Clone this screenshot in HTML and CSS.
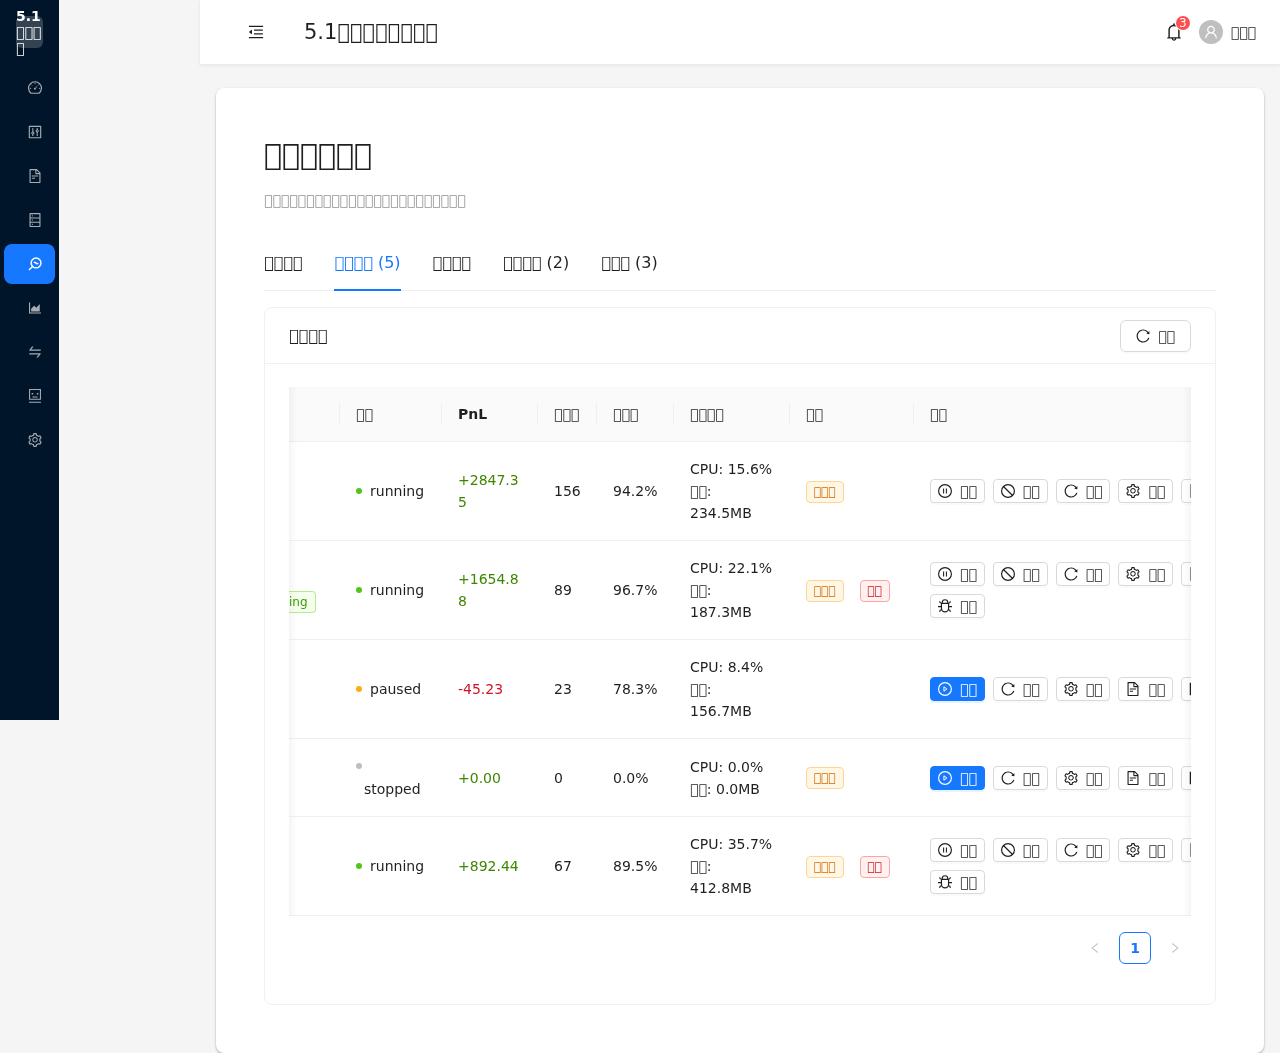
FILE: index.html
```
<!DOCTYPE html>
<html lang="zh-CN">
<head>
<meta charset="utf-8">
<meta name="viewport" content="width=device-width, initial-scale=1">
<title>5.1</title>
<link rel="stylesheet" href="styles.css">
</head>
<body>
<svg class="sprite" aria-hidden="true">
  <symbol id="setting" viewBox="64 64 896 896"><path d="M924.8 625.7l-65.5-56c3.1-19 4.7-38.4 4.7-57.8s-1.6-38.8-4.7-57.8l65.5-56a32.03 32.03 0 009.3-35.2l-.9-2.6a443.74 443.74 0 00-79.7-137.9l-1.8-2.1a32.12 32.12 0 00-35.1-9.5l-81.3 28.9c-30-24.6-63.5-44-99.7-57.6l-15.7-85a32.05 32.05 0 00-25.8-25.7l-2.7-.5c-52.1-9.4-106.9-9.4-159 0l-2.7.5a32.05 32.05 0 00-25.8 25.7l-15.8 85.4a351.86 351.86 0 00-99 57.4l-81.9-29.1a32 32 0 00-35.1 9.5l-1.8 2.1a446.02 446.02 0 00-79.7 137.9l-.9 2.6c-4.5 12.5-.8 26.5 9.3 35.2l66.3 56.6c-3.1 18.8-4.6 38-4.6 57.1 0 19.2 1.5 38.4 4.6 57.1L99 625.5a32.03 32.03 0 00-9.3 35.2l.9 2.6c18.1 50.4 44.9 96.9 79.7 137.9l1.8 2.1a32.12 32.12 0 0035.1 9.5l81.9-29.1c29.8 24.5 63.1 43.9 99 57.4l15.8 85.4a32.05 32.05 0 0025.8 25.7l2.7.5a449.4 449.4 0 00159 0l2.7-.5a32.05 32.05 0 0025.8-25.7l15.7-85a350 350 0 0099.7-57.6l81.3 28.9a32 32 0 0035.1-9.5l1.8-2.1c34.8-41.1 61.6-87.5 79.7-137.9l.9-2.6c4.5-12.3.8-26.3-9.3-35zM788.3 465.9c2.5 15.1 3.8 30.6 3.8 46.1s-1.3 31-3.8 46.1l-6.6 40.1 74.7 63.9a370.03 370.03 0 01-42.6 73.6L721 702.8l-31.4 25.8c-23.9 19.6-50.5 35-79.3 45.8l-38.1 14.3-17.9 97a377.5 377.5 0 01-85 0l-17.9-97.2-37.8-14.5c-28.5-10.8-55-26.2-78.7-45.7l-31.4-25.9-93.4 33.2c-17-22.9-31.2-47.6-42.6-73.6l75.5-64.5-6.5-40c-2.4-14.9-3.7-30.3-3.7-45.5 0-15.3 1.2-30.6 3.7-45.5l6.5-40-75.5-64.5c11.3-26.1 25.6-50.7 42.6-73.6l93.4 33.2 31.4-25.9c23.7-19.5 50.2-34.9 78.7-45.7l37.9-14.3 17.9-97.2c28.1-3.2 56.8-3.2 85 0l17.9 97 38.1 14.3c28.7 10.8 55.4 26.2 79.3 45.8l31.4 25.8 92.8-32.9c17 22.9 31.2 47.6 42.6 73.6L781.8 426l6.5 39.9zM512 326c-97.2 0-176 78.8-176 176s78.8 176 176 176 176-78.8 176-176-78.8-176-176-176zm79.2 255.2A111.6 111.6 0 01512 614c-29.9 0-58-11.7-79.2-32.8A111.6 111.6 0 01400 502c0-29.9 11.7-58 32.8-79.2C454 401.6 482.1 390 512 390c29.9 0 58 11.6 79.2 32.8A111.6 111.6 0 01624 502c0 29.9-11.7 58-32.8 79.2z"/></symbol>
  <symbol id="reload" viewBox="64 64 896 896"><path d="M909.1 209.3l-56.4 44.1C775.8 155.1 656.2 92 521.9 92 290 92 102.3 279.5 102 511.5 101.7 743.7 289.8 932 521.9 932c181.3 0 335.8-115 394.6-276.1 1.5-4.2-.7-8.9-4.9-10.3l-56.7-19.5a8 8 0 00-10.1 4.8c-1.8 5-3.8 10-5.9 14.9-17.3 41-42.1 77.8-73.7 109.4A344.77 344.77 0 01655.9 829c-42.3 17.9-87.4 27-133.8 27-46.5 0-91.5-9.1-133.8-27A341.5 341.5 0 01279 755.2a342.16 342.16 0 01-73.7-109.4c-17.9-42.4-27-87.4-27-133.9s9.1-91.5 27-133.9c17.3-41 42.1-77.8 73.7-109.4 31.6-31.6 68.4-56.4 109.3-73.8 42.3-17.9 87.4-27 133.8-27 46.5 0 91.5 9.1 133.8 27a341.5 341.5 0 01109.3 73.8c9.9 9.9 19.2 20.4 27.8 31.4l-60.2 47a8 8 0 003 14.1l175.6 43c5 1.2 9.9-2.6 9.9-7.7l.8-180.9c-.1-6.6-7.8-10.3-13-6.2z"/></symbol>
  <symbol id="file" viewBox="64 64 896 896"><path d="M854.6 288.6L639.4 73.4c-6-6-14.1-9.4-22.6-9.4H192c-17.7 0-32 14.3-32 32v832c0 17.7 14.3 32 32 32h640c17.7 0 32-14.3 32-32V311.3c0-8.5-3.4-16.7-9.4-22.7zM790.2 326H602V137.8L790.2 326zm1.8 562H232V136h302v216a42 42 0 0042 42h216v494zM504 618H320c-4.4 0-8 3.6-8 8v48c0 4.4 3.6 8 8 8h184c4.4 0 8-3.6 8-8v-48c0-4.4-3.6-8-8-8zM312 490v48c0 4.4 3.6 8 8 8h384c4.4 0 8-3.6 8-8v-48c0-4.4-3.6-8-8-8H320c-4.4 0-8 3.6-8 8z"/></symbol>
  <symbol id="database" viewBox="64 64 896 896"><path d="M832 64H192c-17.7 0-32 14.3-32 32v832c0 17.7 14.3 32 32 32h640c17.7 0 32-14.3 32-32V96c0-17.7-14.3-32-32-32zm-600 72h560v208H232V136zm560 480H232V408h560v208zm0 272H232V680h560v208zM304 240a40 40 0 1080 0 40 40 0 10-80 0zm0 272a40 40 0 1080 0 40 40 0 10-80 0zm0 272a40 40 0 1080 0 40 40 0 10-80 0z"/></symbol>
  <symbol id="control" viewBox="64 64 896 896"><path d="M880 112H144c-17.7 0-32 14.3-32 32v736c0 17.7 14.3 32 32 32h736c17.7 0 32-14.3 32-32V144c0-17.7-14.3-32-32-32zm-40 728H184V184h656v656z"/><g fill="none" stroke="currentColor" stroke-width="64"><path d="M372 256v250M372 662v106M652 256v106M652 518v250"/><circle cx="372" cy="584" r="72"/><circle cx="652" cy="440" r="72"/></g></symbol>
  <symbol id="swap" viewBox="64 64 896 896"><path d="M847.9 592H152c-4.4 0-8 3.6-8 8v60c0 4.4 3.6 8 8 8h605.2L612.9 851c-4.1 5.2-.4 13 6.3 13h72.5c4.9 0 9.5-2.2 12.6-6.1l168.8-214.1c16.5-21 1.6-51.8-25.2-51.8zM872 356H266.8l144.3-183c4.1-5.2.4-13-6.3-13h-72.5c-4.9 0-9.5 2.2-12.6 6.1L150.9 380.2c-16.5 21-1.6 51.8 25.1 51.8h696c4.4 0 8-3.6 8-8v-60c0-4.4-3.6-8-8-8z"/></symbol>
  <symbol id="chart" viewBox="64 64 896 896"><path d="M888 792H200V168c0-4.4-3.6-8-8-8h-56c-4.4 0-8 3.6-8 8v688c0 4.4 3.6 8 8 8h752c4.4 0 8-3.6 8-8v-56c0-4.4-3.6-8-8-8zm-616-64h536c4.4 0 8-3.6 8-8V284c0-7.2-8.7-10.7-13.7-5.7L592 488.6l-125.4-124a8.03 8.03 0 00-11.3 0l-189 189.6a7.87 7.87 0 00-2.3 5.6V720c0 4.4 3.6 8 8 8z"/></symbol>
  <symbol id="fold" viewBox="64 64 896 896"><path d="M408 442h480c4.4 0 8-3.6 8-8v-56c0-4.4-3.6-8-8-8H408c-4.4 0-8 3.6-8 8v56c0 4.4 3.6 8 8 8zm-8 204c0 4.4 3.6 8 8 8h480c4.4 0 8-3.6 8-8v-56c0-4.4-3.6-8-8-8H408c-4.4 0-8 3.6-8 8v56zm504-486H120c-4.4 0-8 3.6-8 8v56c0 4.4 3.6 8 8 8h784c4.4 0 8-3.6 8-8v-56c0-4.4-3.6-8-8-8zm0 632H120c-4.4 0-8 3.6-8 8v56c0 4.4 3.6 8 8 8h784c4.4 0 8-3.6 8-8v-56c0-4.4-3.6-8-8-8zM115.4 518.9L271.7 642c5.8 4.6 14.4.5 14.4-6.9V388.9c0-7.4-8.5-11.5-14.4-6.9L115.4 505.1a8.74 8.74 0 000 13.8z"/></symbol>
  <symbol id="bell" viewBox="64 64 896 896"><path d="M816 768h-24V428c0-141.1-104.3-257.7-240-277.1V112c0-22.1-17.9-40-40-40s-40 17.9-40 40v38.9c-135.7 19.4-240 136-240 277.1v340h-24c-17.7 0-32 14.3-32 32v32c0 4.4 3.6 8 8 8h216c0 61.8 50.2 112 112 112s112-50.2 112-112h216c4.4 0 8-3.6 8-8v-32c0-17.7-14.3-32-32-32zM512 888c-26.5 0-48-21.5-48-48h96c0 26.5-21.5 48-48 48zM304 768V428c0-55.6 21.6-107.8 60.9-147.1S456.4 220 512 220c55.6 0 107.8 21.6 147.1 60.9S720 372.4 720 428v340H304z"/></symbol>
  <symbol id="user" viewBox="64 64 896 896"><path d="M858.5 763.6a374 374 0 00-80.6-119.5 375.63 375.63 0 00-119.5-80.6c-.4-.2-.8-.3-1.2-.5C719.5 518 760 444.7 760 362c0-137-111-248-248-248S264 225 264 362c0 82.7 40.5 156 102.8 201.1-.4.2-.8.3-1.2.5-44.8 18.9-85 46-119.5 80.6a375.63 375.63 0 00-80.6 119.5A371.7 371.7 0 00136 901.8a8 8 0 008 8.2h60c4.4 0 7.9-3.5 8-7.8 2-77.2 33-149.5 87.8-204.3 56.7-56.7 132-87.9 212.2-87.9s155.5 31.2 212.2 87.9C779 752.7 810 825 812 902.2c.1 4.4 3.6 7.8 8 7.8h60a8 8 0 008-8.2c-1-47.8-10.9-94.3-29.5-138.2zM512 534c-45.9 0-89.1-17.9-121.6-50.4S340 407.9 340 362c0-45.9 17.9-89.1 50.4-121.6S466.1 190 512 190s89.1 17.9 121.6 50.4S684 316.1 684 362c0 45.9-17.9 89.1-50.4 121.6S557.9 534 512 534z"/></symbol>
  <symbol id="left" viewBox="64 64 896 896"><path d="M724 218.3V141c0-6.7-7.7-10.4-12.9-6.3L260.3 486.8a31.86 31.86 0 000 50.3l450.8 352.1c5.3 4.1 12.9.4 12.9-6.3v-77.3c0-4.9-2.3-9.6-6.1-12.6l-360-281 360-281.1c3.8-3 6.1-7.7 6.1-12.6z"/></symbol>
  <symbol id="right" viewBox="64 64 896 896"><path d="M765.7 486.8L314.9 134.7A7.97 7.97 0 00302 141v77.3c0 4.9 2.3 9.6 6.1 12.6l360 281.1-360 281.1c-3.9 3-6.1 7.7-6.1 12.6V883c0 6.7 7.7 10.4 12.9 6.3l450.8-352.1a31.96 31.96 0 000-50.4z"/></symbol>
  <symbol id="dashboard" viewBox="64 64 896 896"><g fill="none" stroke="currentColor" stroke-width="72"><path d="M260 846A412 412 0 1 1 764 846Z" stroke-linejoin="round"/><path stroke-width="56" d="M512 182v84M262 286l58 58M762 286l-58 58M180 536h84M760 536h84M500 556l150-148"/></g><circle cx="500" cy="558" r="56"/></symbol>
  <symbol id="monitor" viewBox="64 64 896 896"><g fill="none" stroke="currentColor"><circle cx="580" cy="444" r="314" stroke-width="92"/><path stroke-width="92" d="M350 674L130 894"/><path stroke-width="84" d="M430 404l110 12 78 84 112-24"/></g></symbol>
  <symbol id="robot" viewBox="64 64 896 896"><path fill="none" stroke="currentColor" stroke-width="68" d="M164 100h696v620H164z"/><path d="M300 312h96v96h-96zM628 312h96v96h-96zM352 540h320v68H352zM128 876h768v72H128z"/></symbol>
  <symbol id="pause" viewBox="64 64 896 896"><g fill="none" stroke="currentColor" stroke-width="74"><circle cx="512" cy="512" r="410"/><path stroke-width="68" d="M422 352v320M602 352v320"/></g></symbol>
  <symbol id="stop" viewBox="64 64 896 896"><g fill="none" stroke="currentColor" stroke-width="76"><circle cx="512" cy="512" r="410"/><path d="M222 222l580 580"/></g></symbol>
  <symbol id="play" viewBox="64 64 896 896"><g fill="none" stroke="currentColor" stroke-width="74"><circle cx="512" cy="512" r="410"/><path stroke-width="64" d="M442 370l190 142-190 142z"/></g></symbol>
  <symbol id="bug" viewBox="64 64 896 896"><g fill="none" stroke="currentColor" stroke-width="76"><path d="M284 338h456v320a228 228 0 0 1-456 0zM336 338v-50a176 176 0 0 1 352 0v50M284 338c-90-10-114-60-118-134M740 338c90-10 114-60 118-134M64 548h220M740 548h220M300 718c-90 16-126 70-130 170M724 718c90 16 126 70 130 170"/></g></symbol>
  <symbol id="box" viewBox="64 64 896 896"><path fill="none" stroke="currentColor" stroke-width="80" d="M152 152h720v720H152z"/></symbol>
</svg>

<div class="layout">
  <aside class="sider">
    <div class="logo"><span>5.1<wbr>&#xE000;&#xE000;&#xE000;<wbr>&#xE000;</span></div>
    <nav class="menu">
      <a href="#"><svg><use href="#dashboard"/></svg></a>
      <a href="#"><svg><use href="#control"/></svg></a>
      <a href="#"><svg><use href="#file"/></svg></a>
      <a href="#"><svg><use href="#database"/></svg></a>
      <a href="#" class="active"><svg><use href="#monitor"/></svg></a>
      <a href="#"><svg><use href="#chart"/></svg></a>
      <a href="#"><svg><use href="#swap"/></svg></a>
      <a href="#"><svg><use href="#robot"/></svg></a>
      <a href="#"><svg><use href="#setting"/></svg></a>
    </nav>
  </aside>

  <div class="main">
    <header class="topbar">
      <button class="fold" type="button"><svg><use href="#fold"/></svg></button>
      <h1>5.1&#xE000;&#xE000;&#xE000;&#xE000;&#xE000;&#xE000;&#xE000;&#xE000;</h1>
      <button class="bell" type="button"><svg><use href="#bell"/></svg><span class="count">3</span></button>
      <span class="avatar"><svg><use href="#user"/></svg></span>
      <span class="name">&#xE000;&#xE000;&#xE000;</span>
    </header>

    <main class="content">
      <h2>&#xE000;&#xE000;&#xE000;&#xE000;&#xE000;&#xE000;</h2>
      <p class="intro">&#xE000;&#xE000;&#xE000;&#xE000;&#xE000;&#xE000;&#xE000;&#xE000;&#xE000;&#xE000;&#xE000;&#xE000;&#xE000;&#xE000;&#xE000;&#xE000;&#xE000;&#xE000;&#xE000;&#xE000;&#xE000;&#xE000;&#xE000;&#xE000;</p>

      <div class="tabs" role="tablist">
        <button type="button" role="tab">&#xE000;&#xE000;&#xE000;&#xE000;</button>
        <button type="button" role="tab" class="active" aria-selected="true">&#xE000;&#xE000;&#xE000;&#xE000; (5)</button>
        <button type="button" role="tab">&#xE000;&#xE000;&#xE000;&#xE000;</button>
        <button type="button" role="tab">&#xE000;&#xE000;&#xE000;&#xE000; (2)</button>
        <button type="button" role="tab">&#xE000;&#xE000;&#xE000; (3)</button>
      </div>

      <section class="card">
        <div class="card-head">
          <h3>&#xE000;&#xE000;&#xE000;&#xE000;</h3>
          <button class="btn large" type="button"><svg><use href="#reload"/></svg><span>&#xE000;&#xE000;</span></button>
        </div>
        <div class="card-body">
          <div class="table-wrap">
            <table>
              <colgroup><col class="c-type"><col class="c-status"><col class="c-pnl"><col class="c-trades"><col class="c-rate"><col class="c-usage"><col class="c-flags"><col class="c-actions"></colgroup>
              <thead>
                <tr>
                  <th></th>
                  <th>&#xE000;&#xE000;</th>
                  <th>PnL</th>
                  <th>&#xE000;&#xE000;&#xE000;</th>
                  <th>&#xE000;&#xE000;&#xE000;</th>
                  <th>&#xE000;&#xE000;&#xE000;&#xE000;</th>
                  <th>&#xE000;&#xE000;</th>
                  <th>&#xE000;&#xE000;</th>
                </tr>
              </thead>
              <tbody>
                <tr>
                  <td></td>
                  <td><div class="status"><i class="dot"></i><span>running</span></div></td>
                  <td class="up">+2847.35</td>
                  <td>156</td>
                  <td>94.2%</td>
                  <td><div>CPU: 15.6%</div><div>&#xE000;&#xE000;: 234.5MB</div></td>
                  <td class="flags"><span class="tag orange">&#xE000;&#xE000;&#xE000;</span></td>
                  <td><div class="actions">
                    <button class="btn" type="button"><svg><use href="#pause"/></svg><span>&#xE000;&#xE000;</span></button>
                    <button class="btn" type="button"><svg><use href="#stop"/></svg><span>&#xE000;&#xE000;</span></button>
                    <button class="btn" type="button"><svg><use href="#reload"/></svg><span>&#xE000;&#xE000;</span></button>
                    <button class="btn" type="button"><svg><use href="#setting"/></svg><span>&#xE000;&#xE000;</span></button>
                    <button class="btn" type="button"><svg><use href="#file"/></svg><span>&#xE000;&#xE000;</span></button>
                  </div></td>
                </tr>
                <tr>
                  <td class="type"><span class="tag green cut">ing</span></td>
                  <td><div class="status"><i class="dot"></i><span>running</span></div></td>
                  <td class="up">+1654.88</td>
                  <td>89</td>
                  <td>96.7%</td>
                  <td><div>CPU: 22.1%</div><div>&#xE000;&#xE000;: 187.3MB</div></td>
                  <td class="flags"><span class="tag orange">&#xE000;&#xE000;&#xE000;</span><span class="tag red">&#xE000;&#xE000;</span></td>
                  <td><div class="actions">
                    <button class="btn" type="button"><svg><use href="#pause"/></svg><span>&#xE000;&#xE000;</span></button>
                    <button class="btn" type="button"><svg><use href="#stop"/></svg><span>&#xE000;&#xE000;</span></button>
                    <button class="btn" type="button"><svg><use href="#reload"/></svg><span>&#xE000;&#xE000;</span></button>
                    <button class="btn" type="button"><svg><use href="#setting"/></svg><span>&#xE000;&#xE000;</span></button>
                    <button class="btn" type="button"><svg><use href="#file"/></svg><span>&#xE000;&#xE000;</span></button>
                    <button class="btn" type="button"><svg><use href="#bug"/></svg><span>&#xE000;&#xE000;</span></button>
                  </div></td>
                </tr>
                <tr>
                  <td></td>
                  <td><div class="status"><i class="dot paused"></i><span>paused</span></div></td>
                  <td class="down">-45.23</td>
                  <td>23</td>
                  <td>78.3%</td>
                  <td><div>CPU: 8.4%</div><div>&#xE000;&#xE000;: 156.7MB</div></td>
                  <td></td>
                  <td><div class="actions">
                    <button class="btn primary" type="button"><svg><use href="#play"/></svg><span>&#xE000;&#xE000;</span></button>
                    <button class="btn" type="button"><svg><use href="#reload"/></svg><span>&#xE000;&#xE000;</span></button>
                    <button class="btn" type="button"><svg><use href="#setting"/></svg><span>&#xE000;&#xE000;</span></button>
                    <button class="btn" type="button"><svg><use href="#file"/></svg><span>&#xE000;&#xE000;</span></button>
                    <button class="btn" type="button"><svg><use href="#box"/></svg><span>&#xE000;&#xE000;</span></button>
                  </div></td>
                </tr>
                <tr>
                  <td></td>
                  <td><div class="status"><i class="dot stopped"></i><span>stopped</span></div></td>
                  <td class="up">+0.00</td>
                  <td>0</td>
                  <td>0.0%</td>
                  <td><div>CPU: 0.0%</div><div>&#xE000;&#xE000;: 0.0MB</div></td>
                  <td class="flags"><span class="tag orange">&#xE000;&#xE000;&#xE000;</span></td>
                  <td><div class="actions">
                    <button class="btn primary" type="button"><svg><use href="#play"/></svg><span>&#xE000;&#xE000;</span></button>
                    <button class="btn" type="button"><svg><use href="#reload"/></svg><span>&#xE000;&#xE000;</span></button>
                    <button class="btn" type="button"><svg><use href="#setting"/></svg><span>&#xE000;&#xE000;</span></button>
                    <button class="btn" type="button"><svg><use href="#file"/></svg><span>&#xE000;&#xE000;</span></button>
                    <button class="btn" type="button"><svg><use href="#box"/></svg><span>&#xE000;&#xE000;</span></button>
                  </div></td>
                </tr>
                <tr>
                  <td></td>
                  <td><div class="status"><i class="dot"></i><span>running</span></div></td>
                  <td class="up">+892.44</td>
                  <td>67</td>
                  <td>89.5%</td>
                  <td><div>CPU: 35.7%</div><div>&#xE000;&#xE000;: 412.8MB</div></td>
                  <td class="flags"><span class="tag orange">&#xE000;&#xE000;&#xE000;</span><span class="tag red">&#xE000;&#xE000;</span></td>
                  <td><div class="actions">
                    <button class="btn" type="button"><svg><use href="#pause"/></svg><span>&#xE000;&#xE000;</span></button>
                    <button class="btn" type="button"><svg><use href="#stop"/></svg><span>&#xE000;&#xE000;</span></button>
                    <button class="btn" type="button"><svg><use href="#reload"/></svg><span>&#xE000;&#xE000;</span></button>
                    <button class="btn" type="button"><svg><use href="#setting"/></svg><span>&#xE000;&#xE000;</span></button>
                    <button class="btn" type="button"><svg><use href="#file"/></svg><span>&#xE000;&#xE000;</span></button>
                    <button class="btn" type="button"><svg><use href="#bug"/></svg><span>&#xE000;&#xE000;</span></button>
                  </div></td>
                </tr>
              </tbody>
            </table>
          </div>
          <nav class="pagination">
            <button type="button" disabled><svg><use href="#left"/></svg></button>
            <button type="button" class="current">1</button>
            <button type="button" disabled><svg><use href="#right"/></svg></button>
          </nav>
        </div>
      </section>
    </main>
  </div>
</div>
</body>
</html>
```
FILE: styles.css
```
* { box-sizing: border-box; }

body {
  margin: 0;
  background: #f5f5f5;
  color: rgba(0, 0, 0, .88);
  font: 14px/22px "DejaVu Sans", sans-serif;
}

h1, h2, h3, p { margin: 0; font-weight: 400; }

button {
  margin: 0;
  padding: 0;
  border: 0;
  background: none;
  color: inherit;
  font: inherit;
  cursor: pointer;
}

svg { width: 14px; height: 14px; fill: currentColor; display: block; flex: none; }

.sprite { position: absolute; width: 0; height: 0; }

.layout {
  display: grid;
  grid-template-columns: 200px minmax(0, 1fr);
  will-change: transform;
}

/* sidebar */
.sider { width: 59px; height: 720px; background: #001529; }

.logo {
  display: flex;
  align-items: center;
  height: 32px;
  margin: 16px;
  border-radius: 6px;
  background: rgba(255, 255, 255, .2);
  color: #fff;
  font-weight: 700;
  line-height: 16px;
}

.menu { display: flex; flex-direction: column; gap: 4px; padding: 4px; }

.menu a {
  display: flex;
  align-items: center;
  height: 40px;
  padding-left: 24px;
  border-radius: 8px;
  color: rgba(255, 255, 255, .65);
}

.menu a.active { background: #1677ff; color: #fff; }

/* top bar */
.topbar {
  display: flex;
  align-items: center;
  height: 64px;
  padding: 0 24px;
  background: #fff;
  box-shadow: 0 1px 4px rgba(0, 21, 41, .08);
}

.fold { display: grid; place-items: center; width: 64px; height: 64px; }
.fold svg { width: 16px; height: 16px; }

.topbar h1 { flex: 1; margin-left: 16px; font-size: 21px; line-height: 32px; }

.bell { position: relative; margin-right: 16px; }
.bell svg { width: 18px; height: 18px; }

.count {
  position: absolute;
  top: -7px;
  right: -7px;
  width: 14px;
  height: 14px;
  border-radius: 7px;
  background: #ff4d4f;
  box-shadow: 0 0 0 1px #fff;
  color: #fff;
  font-size: 12px;
  line-height: 14px;
  text-align: center;
}

.avatar {
  display: grid;
  place-items: center;
  width: 24px;
  height: 24px;
  margin-right: 8px;
  border-radius: 50%;
  background: #bfbfbf;
  color: #fff;
}

/* page */
.content {
  margin: 24px 16px 0;
  padding: 48px;
  border-radius: 8px;
  background: #fff;
  box-shadow: 0 1px 3px rgba(0, 0, 0, .12), 0 1px 2px rgba(0, 0, 0, .24);
}

.content h2 { margin-bottom: 15px; font-size: 30px; line-height: 38px; }

.intro { margin-bottom: 25px; color: rgba(0, 0, 0, .45); }

.tabs {
  display: flex;
  gap: 32px;
  margin-bottom: 16px;
  box-shadow: inset 0 -1px #f0f0f0;
}

.tabs button { padding: 14px 0 16px; font-size: 16px; line-height: 25px; }
.tabs .active { color: #1677ff; box-shadow: inset 0 -2px #1677ff; }

.card { border: 1px solid #f0f0f0; border-radius: 8px; }

.card-head {
  display: flex;
  align-items: center;
  justify-content: space-between;
  height: 56px;
  padding: 0 24px;
  border-bottom: 1px solid #f0f0f0;
}

.card-head h3 { font-size: 16px; line-height: 24px; }

.card-body { padding: 23px 24px 40px; }

/* buttons */
.btn {
  display: flex;
  align-items: center;
  gap: 8px;
  height: 24px;
  padding: 0 7px;
  border: 1px solid #d9d9d9;
  border-radius: 4px;
  background: #fff;
  box-shadow: 0 2px 0 rgba(0, 0, 0, .02);
}

.btn.large { height: 32px; padding: 0 15px; border-radius: 6px; }

.btn.primary {
  border-color: #1677ff;
  background: #1677ff;
  box-shadow: 0 2px 0 rgba(5, 145, 255, .1);
  color: #fff;
}

/* table */
.table-wrap { position: relative; overflow: hidden; }

.table-wrap::before,
.table-wrap::after {
  content: "";
  position: absolute;
  top: 0;
  bottom: 0;
  width: 30px;
  pointer-events: none;
}

.table-wrap::before { left: 0; box-shadow: inset 10px 0 8px -8px rgba(5, 5, 5, .06); }
.table-wrap::after { right: 0; box-shadow: inset -10px 0 8px -8px rgba(5, 5, 5, .06); }

table { width: 977px; table-layout: fixed; border-collapse: separate; border-spacing: 0; }

.c-type { width: 51px; }
.c-status { width: 102px; }
.c-pnl { width: 96px; }
.c-trades { width: 59px; }
.c-rate { width: 77px; }
.c-usage { width: 116px; }
.c-flags { width: 124px; }
.c-actions { width: 352px; }

th, td {
  padding: 16px;
  border-bottom: 1px solid #f0f0f0;
  text-align: left;
  overflow-wrap: break-word;
}

th {
  background: linear-gradient(#f0f0f0, #f0f0f0) right center / 1px 22px no-repeat #fafafa;
  font-weight: 700;
  white-space: nowrap;
}

td.type { padding: 40px 24px 16px 0; }

.status { display: flex; flex-wrap: wrap; row-gap: 1px; }
.status span { margin-left: 8px; }

.dot { width: 6px; height: 6px; margin: 8px 0; border-radius: 50%; background: #52c41a; }
.dot.paused { background: #faad14; }
.dot.stopped { background: #bfbfbf; }

.up { color: #3f8600; }
.down { color: #cf1322; }

.flags { white-space: nowrap; }

.tag {
  display: inline-block;
  height: 22px;
  margin-right: 16px;
  padding: 0 7px;
  border: 1px solid;
  border-radius: 4px;
  font-size: 12px;
  line-height: 20px;
}

.tag.orange { border-color: #ffd591; background: #fff7e6; color: #d46b08; }
.tag.red { border-color: #ffa39e; background: #fff1f0; color: #cf1322; }
.tag.green { border-color: #b7eb8f; background: #f6ffed; color: #389e0d; }

.tag.cut { display: block; margin: 0; padding-left: 0; border-left: 0; border-radius: 0 4px 4px 0; }

.actions { display: flex; flex-wrap: wrap; gap: 8px; }

/* pagination */
.pagination { display: flex; justify-content: flex-end; gap: 8px; margin-top: 16px; }

.pagination button {
  display: grid;
  place-items: center;
  width: 32px;
  height: 32px;
  border-radius: 6px;
}

.pagination svg { width: 12px; height: 12px; }
.pagination button:disabled { color: rgba(0, 0, 0, .25); }
.pagination .current { border: 1px solid #1677ff; color: #1677ff; font-weight: 700; }
```
